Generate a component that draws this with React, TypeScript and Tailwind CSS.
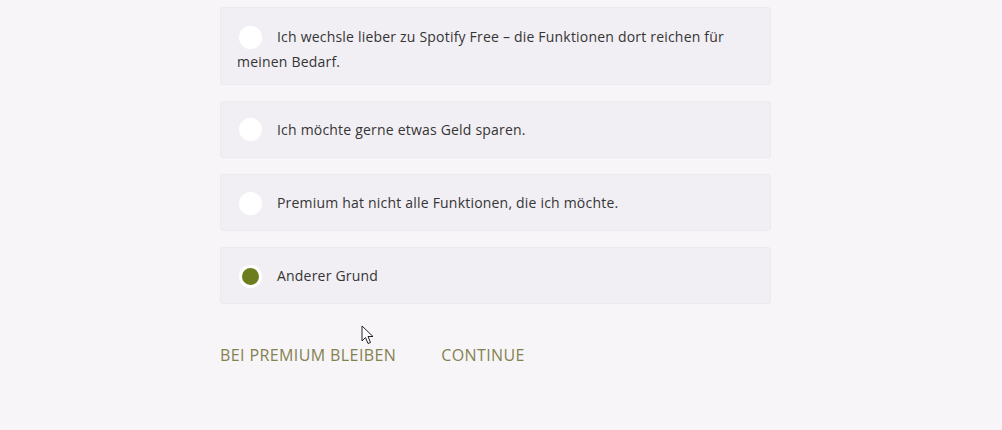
import { useState } from "react";

const reasons = [
  "Ich wechsle lieber zu Spotify Free – die Funktionen dort reichen für meinen Bedarf.",
  "Ich möchte gerne etwas Geld sparen.",
  "Premium hat nicht alle Funktionen, die ich möchte.",
  "Anderer Grund",
];

function Radio({ checked }: { checked: boolean }) {
  return (
    <span className="mr-[15px] ml-[2px] inline-flex h-[23px] w-[23px] items-center justify-center rounded-full bg-white align-middle">
      {checked ? <span className="h-[17px] w-[17px] rounded-full bg-[#6b7d1d]" /> : null}
    </span>
  );
}

export default function App() {
  const [selected, setSelected] = useState(3);

  return (
    <main
      className="relative min-h-[430px] w-full bg-[#f8f5f9] pl-[220px] pt-[7px]"
      style={{ fontFamily: '"Open Sans", Arial, sans-serif' }}
    >
      <div className="flex w-[551px] flex-col gap-[16px]">
        {reasons.map((reason, i) => (
          <button
            key={reason}
            type="button"
            onClick={() => setSelected(i)}
            className={
              "rounded-[3px] border border-[#ece9ef] bg-[#f1eff4] pl-[16px] pr-[40px] text-left text-[14px] leading-[24px] tracking-[0.2px] text-[#353535] " +
              (i === 0 ? "pt-[16px] pb-[9px]" : "py-[15px]")
            }
          >
            <Radio checked={selected === i} />
            <span className="align-middle">{reason}</span>
          </button>
        ))}
      </div>

      <div className="mt-[39px] flex gap-[45px] text-[16px] tracking-[0.4px] text-[#83824f]">
        <button type="button" className="uppercase">Bei Premium bleiben</button>
        <button type="button" className="uppercase">Continue</button>
      </div>

      <svg
        className="absolute left-[361px] top-[325px]"
        width="13"
        height="20"
        viewBox="0 0 13 20"
      >
        <path
          d="M1 1 L1 16 L4.5 12.5 L7 18.5 L9.5 17.5 L7 11.5 L12 11.5 Z"
          fill="white"
          stroke="#222"
          strokeWidth="1"
          strokeLinejoin="round"
        />
      </svg>
    </main>
  );
}
